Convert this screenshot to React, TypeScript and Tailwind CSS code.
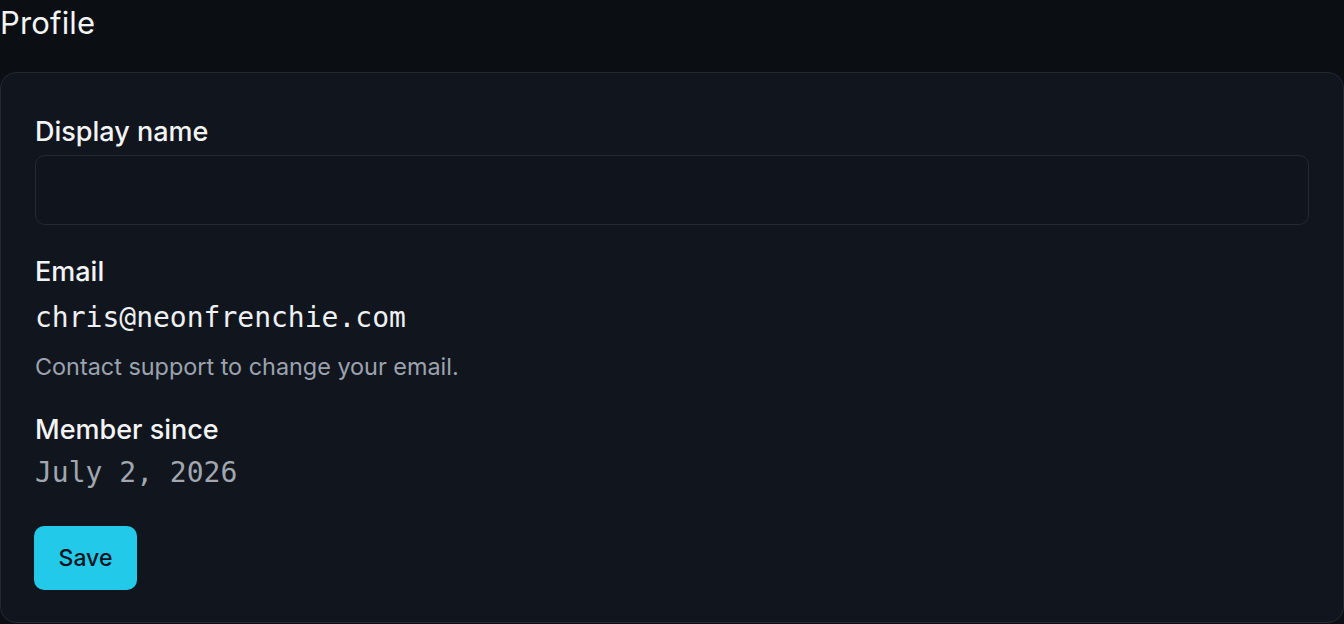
export default function App() {
  return (
    <div className="min-h-screen w-full bg-[#0b0e13] font-['Inter',sans-serif]">
      <h1 className="pt-[5px] text-[31px] leading-[36px] font-normal text-[#f3f4f6] tracking-[0.005em]">Profile</h1>
      <div className="mt-[31px] rounded-[16px] border border-[#222932] bg-[#11161e] px-[34px] pt-[42px] pb-[32px]">
        <label className="block text-[27px] leading-[34px] font-medium text-[#f3f4f6]">Display name</label>
        <input
          type="text"
          className="mt-[6px] block h-[70px] w-full rounded-[10px] border border-[#232a33] bg-[#10141c] px-4 text-[24px] text-[#f3f4f6] outline-none"
        />
        <div className="mt-[30px] text-[27px] leading-[34px] font-medium text-[#f3f4f6]">Email</div>
        <div className="mt-[11px] font-['DejaVu_Sans_Mono',monospace] text-[28px] leading-[36px] text-[#eef0f3]">chris@neonfrenchie.com</div>
        <div className="mt-[16px] text-[23.4px] leading-[30px] text-[#9ca3af]">Contact support to change your email.</div>
        <div className="mt-[31px] text-[27px] leading-[34px] font-medium text-[#f3f4f6]">Member since</div>
        <div className="mt-[8px] font-['DejaVu_Sans_Mono',monospace] text-[28px] leading-[36px] text-[#a1a7b0]">July 2, 2026</div>
        <button className="-ml-px mt-[35px] h-[64px] w-[103px] rounded-[10px] bg-[#22c9e8] text-[23px] font-medium text-[#0b1220]">Save</button>
      </div>
    </div>
  );
}
